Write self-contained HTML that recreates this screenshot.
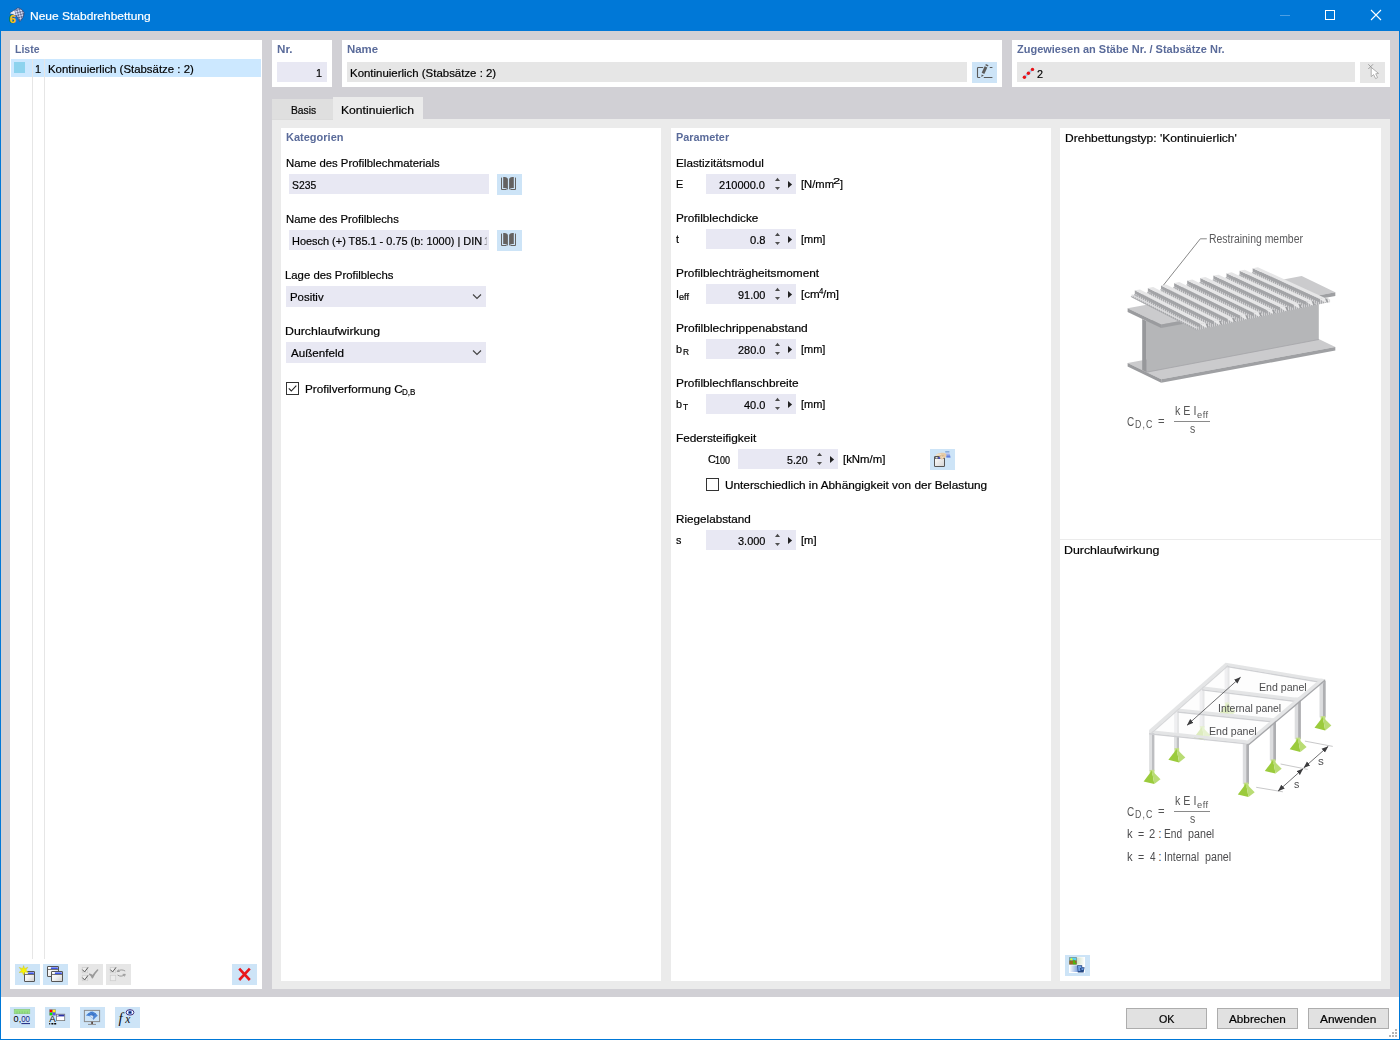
<!DOCTYPE html>
<html lang="de">
<head>
<meta charset="utf-8">
<title>Neue Stabdrehbettung</title>
<style>
*{box-sizing:border-box;margin:0;padding:0}
html,body{width:1400px;height:1040px;overflow:hidden}
body{position:relative;background:#d1d0d5;font-family:"Liberation Sans",sans-serif;font-size:12px;color:#000}
.a{position:absolute}
.t{position:absolute;white-space:pre;font-size:11.5px;line-height:14px;height:14px;transform-origin:0 50%;-webkit-text-stroke:.2px}
.w{background:#fff}
.in{background:#e8e8f3}
.gr{background:#e6e6e6}
.bb{background:#cde4f7}
.btn{position:absolute;background:#e1e1e1;border:1px solid #adadad;width:81px;height:21px}
svg{position:absolute;overflow:visible}
.ls1{letter-spacing:1px}
.ls05{letter-spacing:.5px}
.ic{position:absolute;width:25px;height:21px}
</style>
</head>
<body>
<div class="a" style="left:0;top:0;width:1400px;height:31px;background:#0078d7"></div>
<div class="a" style="left:0;top:0;width:1px;height:1040px;background:#0078d7"></div>
<div class="a" style="left:1399px;top:0;width:1px;height:1040px;background:#0078d7"></div>
<div class="a" style="left:0;top:1039px;width:1400px;height:1px;background:#0078d7"></div>
<div class="t" style="left:29.66px;top:9.02px;transform:scaleX(1.0426);color:#fff;">Neue Stabdrehbettung</div>
<svg style="left:8px;top:6px" width="18" height="18" viewBox="0 0 18 18">
<defs><pattern id="chk" width="3.6" height="3.6" patternUnits="userSpaceOnUse" patternTransform="rotate(30)"><rect width="3.6" height="3.6" fill="#ccd6f2"/><rect width="1.8" height="1.8" fill="#6a7398"/><rect x="1.8" y="1.8" width="1.8" height="1.8" fill="#6a7398"/></pattern></defs>
<path d="M1.8,7.2L9.8,1.9C12.5,2.2 15,4 16.1,6.8C16,10 14.2,13.5 11.7,15.8C10.8,13.2 9.6,11 8,9.5C6,8.6 3.8,8 1.8,7.2Z" fill="url(#chk)" stroke="#39416a" stroke-width=".7"/>
<path d="M1.8,7.2L6.4,4.2C6.6,5.8 7.2,7.6 8,9.5C6,8.6 3.8,8 1.8,7.2Z" fill="#f2f4fb" opacity=".85"/>
<text x="1.5" y="16.5" font-family="Liberation Sans, sans-serif" font-weight="bold" font-size="11.5" fill="#f7c81c" stroke="#7a5c10" stroke-width=".6" paint-order="stroke">6</text>
</svg>
<svg style="left:1270px;top:0" width="130" height="31" viewBox="0 0 130 31">
<path d="M10,15.5H20" stroke="#4d9fe3" stroke-width="1"/>
<rect x="55.5" y="10.5" width="9" height="9" fill="none" stroke="#fff" stroke-width="1"/>
<path d="M101,10L111,20M111,10L101,20" stroke="#fff" stroke-width="1.1"/>
</svg>
<div class="a w" style="left:10px;top:40px;width:252px;height:949px"></div>
<div class="t" style="left:14.91px;top:42.02px;transform:scaleX(0.9167);font-weight:bold;-webkit-text-stroke:0;color:#5a6b9a;-webkit-text-stroke:0;">Liste</div>
<div class="a" style="left:11px;top:59px;width:250px;height:18px;background:#cce8ff"></div>
<div class="a" style="left:14px;top:62px;width:11px;height:11px;background:#8dd3ee"></div>
<div class="a" style="left:32px;top:59px;width:1px;height:900px;background:#e6e6e6"></div>
<div class="a" style="left:44px;top:59px;width:1px;height:900px;background:#e6e6e6"></div>
<div class="t" style="left:35.00px;top:62.02px;transform:scaleX(0.9400);">1</div>
<div class="t" style="left:47.51px;top:62.02px;transform:scaleX(0.9915);">Kontinuierlich (Stabsätze : 2)</div>
<div class="a w" style="left:272px;top:40px;width:60px;height:47px"></div>
<div class="t" style="left:276.84px;top:42.02px;transform:scaleX(1.0111);font-weight:bold;-webkit-text-stroke:0;color:#5a6b9a;-webkit-text-stroke:0;">Nr.</div>
<div class="a in" style="left:277px;top:62px;width:50px;height:20px"></div>
<div class="t" style="left:315.80px;top:66.02px;transform:scaleX(0.9400);">1</div>
<div class="a w" style="left:342px;top:40px;width:660px;height:47px"></div>
<div class="t" style="left:347.26px;top:42.02px;transform:scaleX(0.9925);font-weight:bold;-webkit-text-stroke:0;color:#5a6b9a;-webkit-text-stroke:0;">Name</div>
<div class="a gr" style="left:347px;top:62px;width:620px;height:20px"></div>
<div class="t" style="left:349.51px;top:66.02px;transform:scaleX(0.9942);">Kontinuierlich (Stabsätze : 2)</div>
<div class="a bb" style="left:972px;top:62px;width:25px;height:21px"></div>
<svg class="ic" style="left:972px;top:62px" viewBox="0 0 25 21">
<path d="M10.7,5.5H6.3Q5.5,5.5 5.5,6.3V14.7Q5.5,15.5 6.3,15.5H7.8M12.2,15.5H20M18.2,5.5H20" fill="none" stroke="#5a5a5a" stroke-width="1.1" stroke-linecap="round"/>
<path d="M14,4.9L11,11.4" stroke="#5a5a5a" stroke-width="2.9"/>
<path d="M15.2,2.6L14.6,3.9" stroke="#5a5a5a" stroke-width="2.9"/>
<path d="M9.3,15L9.6,12.4L11.9,13.4Z" fill="#5a5a5a"/>
</svg>
<div class="a w" style="left:1012px;top:40px;width:378px;height:47px"></div>
<div class="t" style="left:1017.11px;top:42.02px;transform:scaleX(0.9554);font-weight:bold;-webkit-text-stroke:0;color:#5a6b9a;-webkit-text-stroke:0;">Zugewiesen an Stäbe Nr. / Stabsätze Nr.</div>
<div class="a gr" style="left:1017px;top:62px;width:338px;height:20px"></div>
<svg style="left:1020px;top:64px" width="16" height="16" viewBox="0 0 16 16">
<path d="M4.4,13.3L12.5,5.4" stroke="#a9c6e6" stroke-width="2.2"/>
<circle cx="4.4" cy="13.3" r="1.7" fill="#e81216"/><circle cx="8.4" cy="9.3" r="1.7" fill="#e81216"/><circle cx="12.5" cy="5.4" r="1.7" fill="#e81216"/>
</svg>
<div class="t" style="left:1037.38px;top:67.02px;transform:scaleX(0.9400);">2</div>
<div class="a gr" style="left:1360px;top:62px;width:25px;height:21px"></div>
<svg class="ic" style="left:1360px;top:62px" viewBox="0 0 25 21">
<path d="M8.3,2.3L13,7M13,2.3L8.3,7" stroke="#8c8c8c" stroke-width=".8"/>
<path d="M11.2,5.4L11.2,14.6L13.6,12.6L15.6,16.6L17.6,15.6L15.7,11.8L18.6,11.4Z" fill="#fff" stroke="#a0a0a0" stroke-width=".8" stroke-linejoin="round"/>
</svg>
<div class="a" style="left:333px;top:97px;width:90px;height:23px;background:#ebebeb"></div>
<div class="a" style="left:272px;top:119px;width:1118px;height:870px;background:#ebebeb"></div>
<div class="a" style="left:272px;top:99px;width:61px;height:21px;background:#dfdfdf;border-bottom:1px solid #dbdbdb"></div>
<div class="t" style="left:290.79px;top:103.32px;transform:scaleX(0.8948);">Basis</div>
<div class="t" style="left:341.45px;top:103.32px;transform:scaleX(1.0565);">Kontinuierlich</div>
<div class="a w" style="left:281px;top:128px;width:380px;height:853px"></div>
<div class="a w" style="left:671px;top:128px;width:380px;height:853px"></div>
<div class="a w" style="left:1060px;top:128px;width:321px;height:853px"></div>
<div class="a" style="left:1060px;top:539px;width:321px;height:1px;background:#ebebeb"></div>
<div class="t" style="left:286.08px;top:130.02px;transform:scaleX(0.9567);font-weight:bold;-webkit-text-stroke:0;color:#5a6b9a;-webkit-text-stroke:0;">Kategorien</div>
<div class="t" style="left:285.91px;top:156.02px;transform:scaleX(0.9861);">Name des Profilblechmaterials</div>
<div class="a in" style="left:289px;top:174px;width:200px;height:20px"></div>
<div class="t" style="left:292.15px;top:178.02px;transform:scaleX(0.8992);">S235</div>
<div class="t" style="left:285.92px;top:212.02px;transform:scaleX(0.9802);">Name des Profilblechs</div>
<div class="a in" style="left:289px;top:230px;width:200px;height:20px"></div>
<div class="a" style="left:289px;top:230px;width:198px;height:20px;overflow:hidden;-webkit-mask-image:linear-gradient(90deg,#000 193px,transparent 200px);mask-image:linear-gradient(90deg,#000 193px,transparent 200px)"><div style="position:absolute;left:-289px;top:-230px">
<div class="t" style="left:291.74px;top:234.02px;transform:scaleX(0.9508);">Hoesch (+) T85.1 - 0.75 (b: 1000) | DIN</div>
<div class="t" style="left:484.40px;top:234.02px;transform:scaleX(0.9400);">18807</div>
</div></div>
<div class="a bb" style="left:497px;top:174px;width:25px;height:21px"></div>
<svg class="ic" style="left:497px;top:174px" viewBox="0 0 25 21">
<g fill="#646261"><path d="M6.2,3H7.6C9.6,3 10.9,4.4 10.9,5.4V16C10.4,14.7 9.2,14 7.8,14H6.2Z"/><path d="M16.8,3H15.4C13.4,3 12.1,4.4 12.1,5.4V16C12.6,14.7 13.8,14 15.2,14H16.8Z"/></g>
<path d="M4.5,4V15.5H9.2M18.5,4V15.5H13.8" fill="none" stroke="#646261" stroke-width="1" stroke-linecap="round" stroke-linejoin="round"/>
</svg>
<div class="a bb" style="left:497px;top:230px;width:25px;height:21px"></div>
<svg class="ic" style="left:497px;top:230px" viewBox="0 0 25 21">
<g fill="#646261"><path d="M6.2,3H7.6C9.6,3 10.9,4.4 10.9,5.4V16C10.4,14.7 9.2,14 7.8,14H6.2Z"/><path d="M16.8,3H15.4C13.4,3 12.1,4.4 12.1,5.4V16C12.6,14.7 13.8,14 15.2,14H16.8Z"/></g>
<path d="M4.5,4V15.5H9.2M18.5,4V15.5H13.8" fill="none" stroke="#646261" stroke-width="1" stroke-linecap="round" stroke-linejoin="round"/>
</svg>
<div class="t" style="left:285.41px;top:268.02px;transform:scaleX(0.9866);">Lage des Profilblechs</div>
<div class="t" style="left:285.34px;top:324.02px;transform:scaleX(1.0717);">Durchlaufwirkung</div>
<div class="a in" style="left:286px;top:286px;width:200px;height:21px"></div>
<div class="t" style="left:290.41px;top:290.02px;transform:scaleX(0.9918);">Positiv</div>
<svg style="left:472px;top:293px" width="10" height="7" viewBox="0 0 10 7"><path d="M1,1.5L5,5.5L9,1.5" fill="none" stroke="#444" stroke-width="1.15"/></svg>
<div class="a in" style="left:286px;top:342px;width:200px;height:21px"></div>
<div class="t" style="left:291.30px;top:346.02px;transform:scaleX(1.0111);">Außenfeld</div>
<svg style="left:472px;top:349px" width="10" height="7" viewBox="0 0 10 7"><path d="M1,1.5L5,5.5L9,1.5" fill="none" stroke="#444" stroke-width="1.15"/></svg>
<div class="a" style="left:286px;top:382px;width:13px;height:13px;border:1px solid #333;background:#fff"></div>
<svg style="left:286px;top:382px" width="13" height="13" viewBox="0 0 13 13"><path d="M2.8,6.4L5.3,9L10.3,3.6" fill="none" stroke="#222" stroke-width="1.1"/></svg>
<div class="t" style="left:304.58px;top:382.02px;transform:scaleX(1.0184);">Profilverformung C</div>
<div class="t" style="left:401.76px;top:385.51px;transform:scaleX(0.8493);font-size:9.5px;line-height:11px;height:11px;">D,B</div>
<div class="t" style="left:675.89px;top:130.02px;transform:scaleX(0.9443);font-weight:bold;-webkit-text-stroke:0;color:#5a6b9a;-webkit-text-stroke:0;">Parameter</div>
<div class="t" style="left:675.58px;top:156.02px;transform:scaleX(1.0174);">Elastizitätsmodul</div>
<div class="a in" style="left:706px;top:174px;width:90px;height:20px"></div>
<div class="t" style="left:719.47px;top:178.02px;transform:scaleX(0.9581);">210000.0</div>
<svg style="left:772px;top:174px" width="24" height="20" viewBox="0 0 24 20"><path d="M3,7L5.5,3.8L8,7Z" fill="#484848"/><path d="M3,13L5.5,16L8,13Z" fill="#505050"/><path d="M16,6.9L20.1,10.45L16,14Z" fill="#222"/></svg>
<div class="t" style="left:675.75px;top:177.02px;transform:scaleX(0.9400);">E</div>
<div class="t" style="left:800.62px;top:177.02px;transform:scaleX(0.9745);">[N/mm</div>
<div class="t" style="left:832.59px;top:175.21px;transform:scaleX(1.3636);font-size:9.5px;line-height:11px;height:11px;">2</div>
<div class="t" style="left:839.85px;top:177.02px;transform:scaleX(0.9400);">]</div>
<div class="t" style="left:675.58px;top:211.02px;transform:scaleX(1.0222);">Profilblechdicke</div>
<div class="a in" style="left:706px;top:229px;width:90px;height:20px"></div>
<div class="t" style="left:749.91px;top:233.02px;transform:scaleX(0.9741);">0.8</div>
<svg style="left:772px;top:229px" width="24" height="20" viewBox="0 0 24 20"><path d="M3,7L5.5,3.8L8,7Z" fill="#484848"/><path d="M3,13L5.5,16L8,13Z" fill="#505050"/><path d="M16,6.9L20.1,10.45L16,14Z" fill="#222"/></svg>
<div class="t" style="left:676.26px;top:232.02px;transform:scaleX(0.9400);">t</div>
<div class="t" style="left:800.64px;top:232.02px;transform:scaleX(0.9560);">[mm]</div>
<div class="t" style="left:675.58px;top:266.02px;transform:scaleX(1.0268);">Profilblechträgheitsmoment</div>
<div class="a in" style="left:706px;top:284px;width:90px;height:20px"></div>
<div class="t" style="left:738.13px;top:288.02px;transform:scaleX(0.9485);">91.00</div>
<svg style="left:772px;top:284px" width="24" height="20" viewBox="0 0 24 20"><path d="M3,7L5.5,3.8L8,7Z" fill="#484848"/><path d="M3,13L5.5,16L8,13Z" fill="#505050"/><path d="M16,6.9L20.1,10.45L16,14Z" fill="#222"/></svg>
<div class="t" style="left:676.01px;top:287.02px;transform:scaleX(0.9400);">I</div>
<div class="t" style="left:679.42px;top:290.51px;transform:scaleX(0.9551);font-size:9.5px;line-height:11px;height:11px;">eff</div>
<div class="t" style="left:800.59px;top:287.02px;transform:scaleX(1.0121);">[cm</div>
<div class="t" style="left:818.84px;top:285.21px;transform:scaleX(0.8247);font-size:9.5px;line-height:11px;height:11px;">4</div>
<div class="t" style="left:823.40px;top:287.02px;transform:scaleX(1.0017);">/m]</div>
<div class="t" style="left:675.56px;top:321.02px;transform:scaleX(1.0409);">Profilblechrippenabstand</div>
<div class="a in" style="left:706px;top:339px;width:90px;height:20px"></div>
<div class="t" style="left:738.08px;top:343.02px;transform:scaleX(0.9502);">280.0</div>
<svg style="left:772px;top:339px" width="24" height="20" viewBox="0 0 24 20"><path d="M3,7L5.5,3.8L8,7Z" fill="#484848"/><path d="M3,13L5.5,16L8,13Z" fill="#505050"/><path d="M16,6.9L20.1,10.45L16,14Z" fill="#222"/></svg>
<div class="t" style="left:675.94px;top:342.02px;transform:scaleX(0.9400);">b</div>
<div class="t" style="left:682.94px;top:345.51px;transform:scaleX(0.8772);font-size:9.5px;line-height:11px;height:11px;">R</div>
<div class="t" style="left:800.64px;top:342.02px;transform:scaleX(0.9560);">[mm]</div>
<div class="t" style="left:675.57px;top:376.02px;transform:scaleX(1.0315);">Profilblechflanschbreite</div>
<div class="a in" style="left:706px;top:394px;width:90px;height:20px"></div>
<div class="t" style="left:744.06px;top:398.02px;transform:scaleX(0.9545);">40.0</div>
<svg style="left:772px;top:394px" width="24" height="20" viewBox="0 0 24 20"><path d="M3,7L5.5,3.8L8,7Z" fill="#484848"/><path d="M3,13L5.5,16L8,13Z" fill="#505050"/><path d="M16,6.9L20.1,10.45L16,14Z" fill="#222"/></svg>
<div class="t" style="left:675.94px;top:397.02px;transform:scaleX(0.9400);">b</div>
<div class="t" style="left:683.22px;top:400.51px;transform:scaleX(0.8889);font-size:9.5px;line-height:11px;height:11px;">T</div>
<div class="t" style="left:800.64px;top:397.02px;transform:scaleX(0.9560);">[mm]</div>
<div class="t" style="left:675.57px;top:431.02px;transform:scaleX(1.0281);">Federsteifigkeit</div>
<div class="a in" style="left:738px;top:449px;width:100px;height:20px"></div>
<div class="t" style="left:786.79px;top:453.02px;transform:scaleX(0.9215);">5.20</div>
<svg style="left:814px;top:449px" width="24" height="20" viewBox="0 0 24 20"><path d="M3,7L5.5,3.8L8,7Z" fill="#484848"/><path d="M3,13L5.5,16L8,13Z" fill="#505050"/><path d="M16,6.9L20.1,10.45L16,14Z" fill="#222"/></svg>
<div class="t" style="left:707.88px;top:452.02px;transform:scaleX(0.9400);">C</div>
<div class="t" style="left:714.93px;top:454.84px;transform:scaleX(0.8990);font-size:10px;line-height:12px;height:12px;">100</div>
<div class="t" style="left:842.91px;top:452.02px;transform:scaleX(0.9902);">[kNm/m]</div>
<div class="a bb" style="left:930px;top:449px;width:25px;height:21px"></div>
<svg class="ic" style="left:930px;top:449px" viewBox="0 0 25 21">
<defs><linearGradient id="wg" x1="0" y1="0" x2="1" y2="1"><stop offset="0" stop-color="#fff"/><stop offset="1" stop-color="#d4d4d4"/></linearGradient>
<linearGradient id="sl" x1="0" y1="0" x2="0" y2="1"><stop offset="0" stop-color="#dfe6fa"/><stop offset="1" stop-color="#3f63d6"/></linearGradient></defs>
<rect x="4.5" y="7.5" width="10" height="10" rx=".2" fill="url(#wg)" stroke="#555" stroke-width="1"/>
<rect x="5" y="8" width="9" height="2" fill="#555"/><rect x="5.6" y="8.2" width="2" height="1.2" fill="#fff"/><rect x="8.4" y="8.2" width="2.6" height="1.4" fill="#3b4bff"/>
<path d="M15.5,3.4H19.4L20.6,8.6H16.4Z" fill="url(#sl)"/><path d="M15.2,2.9H19.4" stroke="#4d7fc4" stroke-width=".9"/>
<path d="M5.4,6.8C6.5,4.8 9.5,3.6 12.5,3.8C14.5,3.6 16,4.4 16.6,6C16.4,7.6 15.2,8.8 13.4,9.6C12.6,10.6 11.4,10.8 10.6,10C9.8,8.6 9.6,7.6 9.4,6.8C8,6.6 6.6,7 5.4,6.8Z" fill="#e6cba6"/>
<path d="M6,6.4C7.4,5.4 9,5 10.6,5.2M10.6,5.4C11,6.8 11.6,8 12.6,8.8" stroke="#f6ead8" stroke-width=".9" fill="none"/>
<path d="M10,6.6C11,7 12.4,7 13.6,6.4" stroke="#c7a678" stroke-width=".7" fill="none"/>
</svg>
<div class="a" style="left:706px;top:478px;width:13px;height:13px;border:1px solid #333;background:#fff"></div>
<div class="t" style="left:724.53px;top:478.02px;transform:scaleX(1.0251);">Unterschiedlich in Abhängigkeit von der Belastung</div>
<div class="t" style="left:675.58px;top:512.02px;transform:scaleX(1.0177);">Riegelabstand</div>
<div class="a in" style="left:706px;top:530px;width:90px;height:20px"></div>
<div class="t" style="left:738.02px;top:534.02px;transform:scaleX(0.9523);">3.000</div>
<svg style="left:772px;top:530px" width="24" height="20" viewBox="0 0 24 20"><path d="M3,7L5.5,3.8L8,7Z" fill="#484848"/><path d="M3,13L5.5,16L8,13Z" fill="#505050"/><path d="M16,6.9L20.1,10.45L16,14Z" fill="#222"/></svg>
<div class="t" style="left:676.32px;top:533.02px;transform:scaleX(0.9400);">s</div>
<div class="t" style="left:800.72px;top:533.02px;transform:scaleX(0.9739);">[m]</div>
<div class="t" style="left:1064.76px;top:131.02px;transform:scaleX(1.0463);">Drehbettungstyp: 'Kontinuierlich'</div>
<div class="t" style="left:1064.33px;top:543.02px;transform:scaleX(1.0739);">Durchlaufwirkung</div>
<svg style="left:0;top:0" width="1400" height="1040" viewBox="0 0 1400 1040"><defs><pattern id="hat" width="2" height="2" patternUnits="userSpaceOnUse"><rect width="2" height="2" fill="#a9aaad"/><rect width="1" height="2" fill="#cfcfd1"/></pattern></defs><polygon points="1127.6,363.0 1301.7,330.8 1335.3,347.0 1161.2,379.2" fill="#cbcbcd"/><polygon points="1161.2,379.2 1335.3,347.0 1335.3,350.6 1161.2,382.8" fill="#9fa0a3"/><polygon points="1127.6,363.0 1161.2,379.2 1161.2,382.8 1127.6,366.6" fill="#9a9b9e"/><polygon points="1146.6,321.1 1318.8,288.0 1318.8,339.5 1146.6,372.2" fill="#b5b6b8"/><polygon points="1142.2,318.9 1146.6,321.1 1146.6,372.2 1142.2,370.0" fill="#97989b"/><path d="M1146.6,372.2L1318.8,339.5" stroke="#a4a5a8" stroke-width=".8" fill="none"/><polygon points="1127.6,308.3 1301.7,276.1 1335.3,292.3 1161.2,324.5" fill="#cbcbcd"/><polygon points="1161.2,324.5 1335.3,292.3 1335.3,295.9 1161.2,328.1" fill="#9fa0a3"/><polygon points="1127.6,308.3 1161.2,324.5 1161.2,328.1 1127.6,311.9" fill="#9a9b9e"/><polygon points="1130.6,296.6 1262.7,271.4 1329.9,302.1 1196.2,330.2" fill="url(#hat)"/><polygon points="1130.6,295.9 1131.8,297.5 1197.4,331.1 1196.2,329.5" fill="#a9aaad"/><polygon points="1130.6,294.9 1132.8,294.5 1198.4,328.1 1196.2,328.5" fill="#dcdcde"/><polygon points="1319.4,298.9 1326.1,297.8 1329.1,301.1 1324.9,302.6" fill="#e9e9ea"/><polygon points="1324.9,298.3 1327.3,298.8 1328.3,302.6 1326.5,302.1" fill="#9c9da0"/><polygon points="1252.7,268.2 1319.9,298.9 1319.9,302.4 1252.7,271.8" fill="#a3a4a7"/><polygon points="1252.7,268.2 1257.9,267.3 1325.1,298.0 1319.9,298.9" fill="#e6e6e7"/><polygon points="1252.7,271.8 1251.5,272.9 1255.5,274.9 1256.7,273.6" fill="#b4b5b8"/><polygon points="1306.1,301.7 1312.8,300.5 1315.8,303.9 1311.6,305.3" fill="#e9e9ea"/><polygon points="1311.6,301.1 1314.0,301.5 1315.0,305.3 1313.2,304.9" fill="#9c9da0"/><polygon points="1239.6,270.7 1306.6,301.7 1306.6,305.2 1239.6,274.2" fill="#a3a4a7"/><polygon points="1239.6,270.7 1244.8,269.8 1311.8,300.8 1306.6,301.7" fill="#e6e6e7"/><polygon points="1239.6,274.2 1238.4,275.3 1242.4,277.3 1243.6,276.1" fill="#b4b5b8"/><polygon points="1292.8,304.5 1299.5,303.3 1302.5,306.7 1298.3,308.1" fill="#e9e9ea"/><polygon points="1298.3,303.9 1300.7,304.3 1301.7,308.1 1299.9,307.7" fill="#9c9da0"/><polygon points="1226.5,273.2 1293.3,304.5 1293.3,308.0 1226.5,276.7" fill="#a3a4a7"/><polygon points="1226.5,273.2 1231.7,272.2 1298.5,303.5 1293.3,304.5" fill="#e6e6e7"/><polygon points="1226.5,276.7 1225.3,277.8 1229.3,279.8 1230.5,278.6" fill="#b4b5b8"/><polygon points="1279.6,307.3 1286.3,306.1 1289.3,309.5 1285.1,310.9" fill="#e9e9ea"/><polygon points="1285.1,306.7 1287.5,307.1 1288.5,310.9 1286.7,310.5" fill="#9c9da0"/><polygon points="1213.4,275.6 1280.1,307.3 1280.1,310.8 1213.4,279.1" fill="#a3a4a7"/><polygon points="1213.4,275.6 1218.6,274.7 1285.3,306.3 1280.1,307.3" fill="#e6e6e7"/><polygon points="1213.4,279.1 1212.2,280.2 1216.2,282.2 1217.4,281.0" fill="#b4b5b8"/><polygon points="1266.3,310.0 1273.0,308.8 1276.0,312.2 1271.8,313.6" fill="#e9e9ea"/><polygon points="1271.8,309.4 1274.2,309.8 1275.2,313.6 1273.4,313.2" fill="#9c9da0"/><polygon points="1200.3,278.1 1266.8,310.0 1266.8,313.5 1200.3,281.6" fill="#a3a4a7"/><polygon points="1200.3,278.1 1205.5,277.1 1272.0,309.1 1266.8,310.0" fill="#e6e6e7"/><polygon points="1200.3,281.6 1199.1,282.7 1203.1,284.7 1204.3,283.4" fill="#b4b5b8"/><polygon points="1253.0,312.8 1259.7,311.6 1262.7,315.0 1258.5,316.4" fill="#e9e9ea"/><polygon points="1258.5,312.2 1260.9,312.6 1261.9,316.4 1260.1,316.0" fill="#9c9da0"/><polygon points="1187.2,280.5 1253.5,312.8 1253.5,316.3 1187.2,284.0" fill="#a3a4a7"/><polygon points="1187.2,280.5 1192.4,279.6 1258.7,311.9 1253.5,312.8" fill="#e6e6e7"/><polygon points="1187.2,284.0 1186.0,285.1 1190.0,287.1 1191.2,285.9" fill="#b4b5b8"/><polygon points="1239.7,315.6 1246.4,314.4 1249.4,317.8 1245.2,319.2" fill="#e9e9ea"/><polygon points="1245.2,315.0 1247.6,315.4 1248.6,319.2 1246.8,318.8" fill="#9c9da0"/><polygon points="1174.1,282.9 1240.2,315.6 1240.2,319.1 1174.1,286.4" fill="#a3a4a7"/><polygon points="1174.1,282.9 1179.3,282.0 1245.4,314.6 1240.2,315.6" fill="#e6e6e7"/><polygon points="1174.1,286.4 1172.9,287.6 1176.9,289.6 1178.1,288.3" fill="#b4b5b8"/><polygon points="1226.5,318.4 1233.2,317.2 1236.2,320.6 1232.0,322.0" fill="#e9e9ea"/><polygon points="1232.0,317.8 1234.4,318.2 1235.4,322.0 1233.6,321.6" fill="#9c9da0"/><polygon points="1161.0,285.4 1227.0,318.4 1227.0,321.9 1161.0,288.9" fill="#a3a4a7"/><polygon points="1161.0,285.4 1166.2,284.5 1232.2,317.4 1227.0,318.4" fill="#e6e6e7"/><polygon points="1161.0,288.9 1159.8,290.0 1163.8,292.0 1165.0,290.8" fill="#b4b5b8"/><polygon points="1213.2,321.1 1219.9,319.9 1222.9,323.3 1218.7,324.7" fill="#e9e9ea"/><polygon points="1218.7,320.5 1221.1,320.9 1222.1,324.7 1220.3,324.3" fill="#9c9da0"/><polygon points="1147.9,287.9 1213.7,321.1 1213.7,324.6 1147.9,291.4" fill="#a3a4a7"/><polygon points="1147.9,287.9 1153.1,286.9 1218.9,320.2 1213.7,321.1" fill="#e6e6e7"/><polygon points="1147.9,291.4 1146.7,292.5 1150.7,294.5 1151.9,293.2" fill="#b4b5b8"/><polygon points="1199.9,323.9 1206.6,322.7 1209.6,326.1 1205.4,327.5" fill="#e9e9ea"/><polygon points="1205.4,323.3 1207.8,323.7 1208.8,327.5 1207.0,327.1" fill="#9c9da0"/><polygon points="1134.8,290.3 1200.4,323.9 1200.4,327.4 1134.8,293.8" fill="#a3a4a7"/><polygon points="1134.8,290.3 1140.0,289.4 1205.6,323.0 1200.4,323.9" fill="#e6e6e7"/><polygon points="1134.8,293.8 1133.6,294.9 1137.6,296.9 1138.8,295.7" fill="#b4b5b8"/><path d="M1326.4,298.1l3.2,1.6l0,2.6" stroke="#d8d8da" stroke-width="1" fill="none"/><path d="M1163.4,285.2L1200.3,238.8H1206.8" stroke="#6a6a6a" stroke-width=".8" fill="none"/><g><rect x="1224.6" y="664.7" width="2.7" height="39.0" fill="#dcdde0"/><rect x="1227.3" y="664.7" width="2.2" height="39.0" fill="#c4c5c9"/></g><g><rect x="1199.6" y="688.3" width="2.7" height="39.0" fill="#dcdde0"/><rect x="1202.3" y="688.3" width="2.2" height="39.0" fill="#c4c5c9"/></g><g><rect x="1174.1" y="710.4" width="2.7" height="39.0" fill="#dcdde0"/><rect x="1176.8" y="710.4" width="2.2" height="39.0" fill="#c4c5c9"/></g><g opacity="0.8"><polygon points="1224.9,702.5 1229.5,702.3 1229.7,706.2 1224.9,706.2" fill="#c3df86"/><polygon points="1227.1,703.2 1218.8,714.1 1229.5,716.7" fill="#9bcb3c"/><polygon points="1227.1,703.2 1229.5,716.7 1235.7,711.9" fill="#b9dc74"/></g><g opacity="0.8"><polygon points="1199.9,726.1 1204.5,725.9 1204.7,729.8 1199.9,729.8" fill="#c3df86"/><polygon points="1202.1,726.8 1193.8,737.7 1204.5,740.3" fill="#9bcb3c"/><polygon points="1202.1,726.8 1204.5,740.3 1210.7,735.5" fill="#b9dc74"/></g><polygon points="1225.6,662.7 1325.1,679.2 1248.4,745.8 1149.1,730.1" fill="#fbfbfb" opacity=".6"/><g><rect x="1174.1" y="737.3" width="2.7" height="12.1" fill="#e0e1e3"/><rect x="1176.8" y="737.3" width="2.2" height="12.1" fill="#bfc0c3"/></g><g><polygon points="1174.5,748.2 1179.1,748.0 1179.3,751.9 1174.5,751.9" fill="#c3df86"/><polygon points="1176.7,748.9 1168.4,759.8 1179.1,762.4" fill="#9bcb3c"/><polygon points="1176.7,748.9 1179.1,762.4 1185.3,757.6" fill="#b9dc74"/></g><g><rect x="1319.5" y="680.7" width="3.4" height="36.7" fill="#dcdddf"/><rect x="1322.9" y="680.7" width="2.8" height="36.7" fill="#aeafb2"/></g><g><polygon points="1320.6,716.2 1325.2,716.0 1325.4,719.9 1320.6,719.9" fill="#c3df86"/><polygon points="1322.8,716.9 1314.5,727.8 1325.2,730.4" fill="#9bcb3c"/><polygon points="1322.8,716.9 1325.2,730.4 1331.4,725.6" fill="#b9dc74"/></g><g><rect x="1294.7" y="697.7" width="3.4" height="41.2" fill="#dcdddf"/><rect x="1298.1" y="697.7" width="2.8" height="41.2" fill="#aeafb2"/></g><g><polygon points="1295.8,737.7 1300.4,737.5 1300.6,741.4 1295.8,741.4" fill="#c3df86"/><polygon points="1298.0,738.4 1289.7,749.3 1300.4,751.9" fill="#9bcb3c"/><polygon points="1298.0,738.4 1300.4,751.9 1306.6,747.1" fill="#b9dc74"/></g><g><rect x="1269.8" y="719.4" width="3.4" height="41.2" fill="#dcdddf"/><rect x="1273.2" y="719.4" width="2.8" height="41.2" fill="#aeafb2"/></g><g><polygon points="1270.9,759.4 1275.5,759.2 1275.7,763.1 1270.9,763.1" fill="#c3df86"/><polygon points="1273.1,760.1 1264.8,771.0 1275.5,773.6" fill="#9bcb3c"/><polygon points="1273.1,760.1 1275.5,773.6 1281.7,768.8" fill="#b9dc74"/></g><g><rect x="1242.8" y="742.8" width="3.4" height="41.2" fill="#dcdddf"/><rect x="1246.2" y="742.8" width="2.8" height="41.2" fill="#aeafb2"/></g><g><polygon points="1243.9,782.8 1248.5,782.6 1248.7,786.5 1243.9,786.5" fill="#c3df86"/><polygon points="1246.1,783.5 1237.8,794.4 1248.5,797.0" fill="#9bcb3c"/><polygon points="1246.1,783.5 1248.5,797.0 1254.7,792.2" fill="#b9dc74"/></g><g><rect x="1149.1" y="731.1" width="2.9" height="40.0" fill="#dfe0e2"/><rect x="1152.0" y="731.1" width="2.4" height="40.0" fill="#bdbec1"/></g><g><polygon points="1149.7,769.9 1154.3,769.7 1154.5,773.6 1149.7,773.6" fill="#c3df86"/><polygon points="1151.9,770.6 1143.6,781.5 1154.3,784.1" fill="#9bcb3c"/><polygon points="1151.9,770.6 1154.3,784.1 1160.5,779.3" fill="#b9dc74"/></g><polygon points="1225.6,662.7 1323.6,679.2 1323.6,682.1 1225.6,665.6" fill="#e4e5e6"/><polygon points="1225.6,665.6 1323.6,682.1 1323.6,683.5 1225.6,667.0" fill="#cfd0d3"/><polygon points="1202.0,686.3 1298.8,698.1 1298.8,701.0 1202.0,689.2" fill="#e4e5e6"/><polygon points="1202.0,689.2 1298.8,701.0 1298.8,702.4 1202.0,690.6" fill="#cfd0d3"/><polygon points="1177.5,708.4 1273.9,718.3 1273.9,721.2 1177.5,711.3" fill="#e4e5e6"/><polygon points="1177.5,711.3 1273.9,721.2 1273.9,722.6 1177.5,712.7" fill="#cfd0d3"/><polygon points="1149.1,730.1 1246.9,740.3 1246.9,743.2 1149.1,733.0" fill="#e4e5e6"/><polygon points="1149.1,733.0 1246.9,743.2 1246.9,744.6 1149.1,734.4" fill="#cfd0d3"/><polygon points="1225.6,662.7 1149.1,730.1 1151.2,732.5 1227.7,665.1" fill="#e4e5e6"/><polygon points="1227.7,665.1 1151.2,732.5 1152.0,733.4 1228.5,666.0" fill="#d6d7d9"/><polygon points="1325.1,679.2 1248.4,743.9 1244.1,743.2 1320.8,678.5" fill="#e4e5e6"/><polygon points="1325.1,679.2 1248.4,743.9 1248.4,745.8 1325.1,681.1" fill="#a6a7aa"/><defs><marker id="ah" viewBox="0 0 10 10" refX="9.5" refY="5" markerWidth="8.5" markerHeight="8.5" orient="auto-start-reverse"><path d="M0,1.2L10,5L0,8.8Z" fill="#3c3c3e"/></marker></defs><path d="M1187.1,725.2L1240.5,677.3" stroke="#4a4a4c" stroke-width=".8" marker-start="url(#ah)" marker-end="url(#ah)"/><path d="M1304.9,741.1L1332.8,746.4" stroke="#b0b0b2" stroke-width=".7"/><path d="M1280.6,764.0L1307.7,769.4" stroke="#b0b0b2" stroke-width=".7"/><path d="M1256.2,787.3L1282.9,791.8" stroke="#b0b0b2" stroke-width=".7"/><path d="M1328.1,746.4L1303.8,767.8" stroke="#4a4a4c" stroke-width=".8" marker-start="url(#ah)" marker-end="url(#ah)"/><path d="M1303,768.8L1278.2,791" stroke="#4a4a4c" stroke-width=".8" marker-start="url(#ah)" marker-end="url(#ah)"/></svg>
<div class="t" style="left:1208.77px;top:231.84px;transform:scaleX(0.8691);font-size:12px;line-height:14px;height:14px;color:#5a5a5c;-webkit-text-stroke:0;">Restraining member</div>
<div class="t" style="left:1127.02px;top:415.17px;transform:scaleX(0.8000);font-size:12.5px;line-height:15px;height:15px;color:#555;-webkit-text-stroke:0;">C</div><div class="t" style="left:1135.39px;top:418.36px;transform:scaleX(0.8329);font-size:10.5px;line-height:13px;height:13px;color:#555;-webkit-text-stroke:0;letter-spacing:1.3px;">D,C</div><div class="t" style="left:1158.36px;top:414.37px;transform:scaleX(0.9016);font-size:12.5px;line-height:15px;height:15px;color:#555;-webkit-text-stroke:0;">=</div><div class="t" style="left:1174.99px;top:403.74px;transform:scaleX(0.8905);font-size:12px;line-height:14px;height:14px;color:#555;-webkit-text-stroke:0;">k E I</div><div class="t" style="left:1196.91px;top:408.51px;transform:scaleX(0.9773);font-size:9.5px;line-height:11px;height:11px;color:#555;-webkit-text-stroke:0;letter-spacing:0.5px;">eff</div><div class="t" style="left:1189.65px;top:421.97px;transform:scaleX(0.8364);font-size:12.5px;line-height:15px;height:15px;color:#555;-webkit-text-stroke:0;">s</div><div class="a" style="left:1173.9px;top:420.8px;width:36.2px;height:1px;background:#8a8a8a"></div>
<div class="t" style="left:1127.02px;top:805.17px;transform:scaleX(0.8000);font-size:12.5px;line-height:15px;height:15px;color:#555;-webkit-text-stroke:0;">C</div><div class="t" style="left:1135.39px;top:808.36px;transform:scaleX(0.8329);font-size:10.5px;line-height:13px;height:13px;color:#555;-webkit-text-stroke:0;letter-spacing:1.3px;">D,C</div><div class="t" style="left:1158.36px;top:804.37px;transform:scaleX(0.9016);font-size:12.5px;line-height:15px;height:15px;color:#555;-webkit-text-stroke:0;">=</div><div class="t" style="left:1174.99px;top:793.74px;transform:scaleX(0.8905);font-size:12px;line-height:14px;height:14px;color:#555;-webkit-text-stroke:0;">k E I</div><div class="t" style="left:1196.91px;top:798.51px;transform:scaleX(0.9773);font-size:9.5px;line-height:11px;height:11px;color:#555;-webkit-text-stroke:0;letter-spacing:0.5px;">eff</div><div class="t" style="left:1189.65px;top:811.97px;transform:scaleX(0.8364);font-size:12.5px;line-height:15px;height:15px;color:#555;-webkit-text-stroke:0;">s</div><div class="a" style="left:1173.9px;top:810.8px;width:36.2px;height:1px;background:#8a8a8a"></div>
<div class="t" style="left:1258.87px;top:679.62px;transform:scaleX(0.9214);color:#4c4c4e;-webkit-text-stroke:0;">End panel</div>
<div class="t" style="left:1217.85px;top:701.42px;transform:scaleX(0.9059);color:#4c4c4e;-webkit-text-stroke:0;">Internal panel</div>
<div class="t" style="left:1208.87px;top:723.62px;transform:scaleX(0.9214);color:#4c4c4e;-webkit-text-stroke:0;">End panel</div>
<div class="t" style="left:1318.40px;top:753.72px;transform:scaleX(1.0099);color:#4c4c4e;-webkit-text-stroke:0;">s</div>
<div class="t" style="left:1293.62px;top:776.52px;transform:scaleX(0.9307);color:#4c4c4e;-webkit-text-stroke:0;">s</div>
<div class="t" style="left:1126.75px;top:827.24px;transform:scaleX(0.9333);font-size:12px;line-height:14px;height:14px;color:#4c4c4e;-webkit-text-stroke:0;">k</div>
<div class="t" style="left:1137.92px;top:827.24px;transform:scaleX(0.8814);font-size:12px;line-height:14px;height:14px;color:#4c4c4e;-webkit-text-stroke:0;">=</div>
<div class="t" style="left:1149.44px;top:827.24px;transform:scaleX(0.9273);font-size:12px;line-height:14px;height:14px;color:#4c4c4e;-webkit-text-stroke:0;">2</div>
<div class="t" style="left:1158.25px;top:827.24px;transform:scaleX(1.0000);font-size:12px;line-height:14px;height:14px;color:#4c4c4e;-webkit-text-stroke:0;">:</div>
<div class="t" style="left:1164.19px;top:827.24px;transform:scaleX(0.8487);font-size:12px;line-height:14px;height:14px;color:#4c4c4e;-webkit-text-stroke:0;">End</div>
<div class="t" style="left:1188.33px;top:827.24px;transform:scaleX(0.8942);font-size:12px;line-height:14px;height:14px;color:#4c4c4e;-webkit-text-stroke:0;">panel</div>
<div class="t" style="left:1126.75px;top:849.84px;transform:scaleX(0.9333);font-size:12px;line-height:14px;height:14px;color:#4c4c4e;-webkit-text-stroke:0;">k</div>
<div class="t" style="left:1137.92px;top:849.84px;transform:scaleX(0.8814);font-size:12px;line-height:14px;height:14px;color:#4c4c4e;-webkit-text-stroke:0;">=</div>
<div class="t" style="left:1149.79px;top:849.84px;transform:scaleX(0.8361);font-size:12px;line-height:14px;height:14px;color:#4c4c4e;-webkit-text-stroke:0;">4</div>
<div class="t" style="left:1158.25px;top:849.84px;transform:scaleX(1.0000);font-size:12px;line-height:14px;height:14px;color:#4c4c4e;-webkit-text-stroke:0;">:</div>
<div class="t" style="left:1164.04px;top:849.84px;transform:scaleX(0.8753);font-size:12px;line-height:14px;height:14px;color:#4c4c4e;-webkit-text-stroke:0;">Internal</div>
<div class="t" style="left:1204.63px;top:849.84px;transform:scaleX(0.8906);font-size:12px;line-height:14px;height:14px;color:#4c4c4e;-webkit-text-stroke:0;">panel</div>
<div class="a w" style="left:1px;top:997px;width:1398px;height:42px"></div>
<div class="btn" style="left:1126px;top:1008px"></div>
<div class="btn" style="left:1217px;top:1008px"></div>
<div class="btn" style="left:1308px;top:1008px"></div>
<div class="t" style="left:1158.83px;top:1012.02px;transform:scaleX(0.9315);">OK</div>
<div class="t" style="left:1229.00px;top:1012.02px;transform:scaleX(1.0204);">Abbrechen</div>
<div class="t" style="left:1320.00px;top:1012.02px;transform:scaleX(1.0372);">Anwenden</div>
<svg style="left:1385px;top:1025px" width="14" height="14" viewBox="0 0 14 14"><rect x="10" y="4" width="2" height="2" fill="#b4b4b4"/><rect x="7" y="7" width="2" height="2" fill="#b4b4b4"/><rect x="10" y="7" width="2" height="2" fill="#b4b4b4"/><rect x="4" y="10" width="2" height="2" fill="#b4b4b4"/><rect x="7" y="10" width="2" height="2" fill="#b4b4b4"/><rect x="10" y="10" width="2" height="2" fill="#b4b4b4"/></svg>
<div class="a bb" style="left:15px;top:964px;width:25px;height:21px"></div>
<div class="a bb" style="left:43px;top:964px;width:25px;height:21px"></div>
<div class="a gr" style="left:78px;top:964px;width:25px;height:21px"></div>
<div class="a gr" style="left:106px;top:964px;width:25px;height:21px"></div>
<div class="a bb" style="left:232px;top:964px;width:25px;height:21px"></div>
<svg class="ic" style="left:15px;top:964px" viewBox="0 0 25 21">
<defs><linearGradient id="wg2" x1="0" y1="0" x2="1" y2="1"><stop offset="0" stop-color="#fff"/><stop offset=".5" stop-color="#f2f2f2"/><stop offset="1" stop-color="#cfcfcf"/></linearGradient></defs><rect x="9.5" y="7.5" width="10" height="10" rx=".2" fill="url(#wg2)" stroke="#555" stroke-width="1"/><rect x="12.9" y="8.4" width="5.8999999999999995" height="1.6" fill="#3b56f5"/><path d="M9.5,10.4h10.0" stroke="#555" stroke-width=".9"/><path d="M8.6,1.6L9.6,4.6L12.9,3.2L10.9,6L13.2,8.6L10,8L8.6,11.2L7.4,8.2L4,8.6L6.4,6.3L4.2,3.4L7.6,4.6Z" fill="#f8f400" stroke="#c8c040" stroke-width=".5"/>
</svg>
<svg class="ic" style="left:43px;top:964px" viewBox="0 0 25 21"><rect x="4.5" y="2.5" width="11" height="10" rx=".2" fill="url(#wg2)" stroke="#555" stroke-width="1"/><rect x="7.9" y="3.4" width="6.8999999999999995" height="1.6" fill="#3b56f5"/><path d="M4.5,5.4h11.0" stroke="#555" stroke-width=".9"/><rect x="5.5" y="3.5" width="1.8" height="1.2" fill="#fff"/><rect x="8.5" y="7.5" width="11" height="10" rx=".2" fill="url(#wg2)" stroke="#555" stroke-width="1"/><rect x="11.9" y="8.4" width="6.8999999999999995" height="1.6" fill="#3b56f5"/><path d="M8.5,10.4h11.0" stroke="#555" stroke-width=".9"/><rect x="9.5" y="8.5" width="1.8" height="1.2" fill="#fff"/></svg>
<svg class="ic" style="left:78px;top:964px" viewBox="0 0 25 21"><rect x="4.3" y="3.4" width="5.4" height="5.4" fill="#ececec" stroke="#cfcfcf" stroke-width=".8"/><rect x="4.3" y="11.3" width="5.4" height="5.4" fill="#ececec" stroke="#cfcfcf" stroke-width=".8"/><path d="M4.4,5.6l2.2,2.4l3.4,-4.6" fill="none" stroke="#5c5c5c" stroke-width="1"/><path d="M4.4,13.6l2.2,2.4l3.4,-4.6" fill="none" stroke="#5c5c5c" stroke-width="1"/><path d="M11.6,10.2C12.8,10.6 13.6,11.6 14.4,13.8C15.8,10.8 17.4,8.2 19.6,6C17.6,8 16.4,9.6 14.6,12C13.8,11 12.8,10.4 11.6,10.2Z" fill="#9a9a9a" stroke="#9a9a9a" stroke-width="1.5" stroke-linejoin="round"/></svg>
<svg class="ic" style="left:106px;top:964px" viewBox="0 0 25 21"><rect x="4.3" y="3.4" width="5.4" height="5.4" fill="#ececec" stroke="#cfcfcf" stroke-width=".8"/><rect x="4.3" y="11.3" width="5.4" height="5.4" fill="#ececec" stroke="#cfcfcf" stroke-width=".8"/><path d="M4.4,5.6l2.2,2.4l3.4,-4.6" fill="none" stroke="#5c5c5c" stroke-width="1"/><path d="M11.4,7.4C13.6,5.6 16.6,5.4 19.2,7M11.2,7.6l2.6,-.2M11.2,7.6l1.2,-2" fill="none" stroke="#9c9c9c" stroke-width="1"/><path d="M11.6,11C13.6,12.6 16.4,12.6 19,10.6M19.3,10.3l-2.6,.1M19.3,10.3l-.9,2.2" fill="none" stroke="#9c9c9c" stroke-width="1"/></svg>
<svg class="ic" style="left:232px;top:964px" viewBox="0 0 25 21"><path d="M7.2,4.6L17.8,16M17.8,4.6L7.2,16" stroke="#e8161a" stroke-width="2.6" fill="none"/></svg>
<div class="a bb" style="left:10px;top:1007px;width:25px;height:21px"></div>
<div class="a bb" style="left:45px;top:1007px;width:25px;height:21px"></div>
<div class="a bb" style="left:80px;top:1007px;width:25px;height:21px"></div>
<div class="a bb" style="left:115px;top:1007px;width:25px;height:21px"></div>
<svg class="ic" style="left:10px;top:1007px" viewBox="0 0 25 21">
<rect x="4.2" y="2.4" width="15.6" height="4.3" fill="#98e088" stroke="#86c878" stroke-width=".6"/>
<path d="M7,4.4v2.3M9.6,4.4v2.3M12.2,4.4v2.3M14.8,4.4v2.3M17.4,4.4v2.3" stroke="#7cc46c" stroke-width=".7"/>
<path d="M11.4,16.6H20" stroke="#1a237e" stroke-width="1"/>
<text x="3.6" y="15.3" font-family="Liberation Sans, sans-serif" font-size="9.6" fill="#000" textLength="7.6" lengthAdjust="spacingAndGlyphs">0,</text>
<text x="11.2" y="15.3" font-family="Liberation Sans, sans-serif" font-size="9.6" fill="#1a237e" textLength="8.8" lengthAdjust="spacingAndGlyphs">00</text>
</svg>
<svg class="ic" style="left:45px;top:1007px" viewBox="0 0 25 21">
<rect x="4.2" y="2.2" width="6.6" height="6.4" fill="#8e9494"/>
<rect x="4.8" y="2.8" width="2.4" height="2.3" fill="#f00"/><rect x="7.9" y="2.8" width="2.4" height="2.3" fill="#ff0"/>
<rect x="4.8" y="5.8" width="2.4" height="2.3" fill="#0e0"/><rect x="7.9" y="5.8" width="2.4" height="2.3" fill="#55f"/>
<rect x="11.4" y="7.2" width="8.3" height="6.4" fill="#fff" stroke="#777" stroke-width=".8"/>
<rect x="11.8" y="7.6" width="7.5" height="1.8" fill="#2a34a8"/><rect x="11.9" y="7.7" width="1.6" height="1.3" fill="#ddd"/>
<text x="4.2" y="15.2" font-family="Liberation Sans, sans-serif" font-size="9.5" fill="#000" textLength="6.4" lengthAdjust="spacingAndGlyphs">A</text>
<path d="M4.2,16.7h1M6.4,16.7h2M9.2,16.7h2" stroke="#000" stroke-width="1.4"/>
</svg>
<svg class="ic" style="left:80px;top:1007px" viewBox="0 0 25 21">
<rect x="4.4" y="3.4" width="15.2" height="11.2" fill="none" stroke="#8c8c8c" stroke-width="1"/>
<path d="M5.8,8.6C8,6 10.6,4.2 12.6,4.4C14.6,5 16.6,6.8 17.8,8.8C16.2,9.6 14.6,11.2 13.6,13C12.6,11.2 11.2,9.8 9.6,9.2C8.4,8.8 7,8.6 5.8,8.6Z" fill="#4a86d8"/>
<path d="M9.4,9C10.8,8 12.4,8 13.6,9.2L13.4,12.4C12.4,10.8 11,9.6 9.4,9Z" fill="#dfe9f7"/>
<path d="M8,6.6L12.4,8.2L16,6.4M10.4,5L13,6.8L13.6,12" stroke="#2f62b0" stroke-width=".5" fill="none"/>
<rect x="11.2" y="14.8" width="1.8" height="2.2" fill="#5c4a44"/>
<path d="M8,17.4H16" stroke="#8c8c8c" stroke-width="1"/>
</svg>
<svg class="ic" style="left:115px;top:1007px" viewBox="0 0 25 21">
<text x="3.6" y="15.6" font-family="Liberation Serif, serif" font-style="italic" font-size="15" fill="#111">f</text>
<text x="10.2" y="15.6" font-family="Liberation Serif, serif" font-style="italic" font-size="11.5" fill="#111">x</text>
<ellipse cx="15" cy="5.4" rx="3.9" ry="2.7" fill="#fff" stroke="#3c2c7c" stroke-width="1"/>
<circle cx="15" cy="5.4" r="1.9" fill="#3f6fd8"/><circle cx="15" cy="5.4" r=".8" fill="#111"/>
</svg>
<div class="a bb" style="left:1065px;top:955px;width:25px;height:21px"></div>
<svg class="ic" style="left:1065px;top:955px" viewBox="0 0 25 21">
<defs><linearGradient id="fd" x1="0" y1="0" x2="1" y2="0"><stop offset="0" stop-color="#fff"/><stop offset="1" stop-color="#4f7fd0"/></linearGradient>
<linearGradient id="fd2" x1="0" y1="0" x2="1" y2="0"><stop offset="0" stop-color="#a8c8a0"/><stop offset="1" stop-color="#fff"/></linearGradient></defs>
<rect x="4" y="2" width="16" height="16" fill="#fff"/>
<rect x="12" y="2.4" width="7.6" height="7.2" fill="url(#fd2)" opacity=".55"/>
<rect x="4.2" y="2.2" width="7.6" height="7.4" fill="#6a6a5a"/>
<rect x="4.6" y="2.6" width="6.8" height="3" fill="#5fd0f0"/><rect x="4.6" y="5.6" width="6.8" height="3.6" fill="#9a6a20"/>
<path d="M8,9.2L8.4,4.4L10,5.6L9.4,7.2L11.4,8.4L11.4,9.2Z" fill="#3fc010"/>
<circle cx="6.4" cy="4.2" r="1" fill="#ff0"/>
<rect x="4.4" y="10.4" width="9" height="6.6" fill="url(#fd)" opacity=".8"/>
<path d="M12.2,10.2H17.2V12.2H19.6L18.6,17.4H12.8Z" fill="#274a86"/>
<path d="M13,11H16.4V13H15L15.4,16H13.4Z" fill="#6f9fe4"/><path d="M16.4,13.2H18.8L18.2,15H16.6Z" fill="#6f9fe4"/>
</svg>
</body>
</html>
